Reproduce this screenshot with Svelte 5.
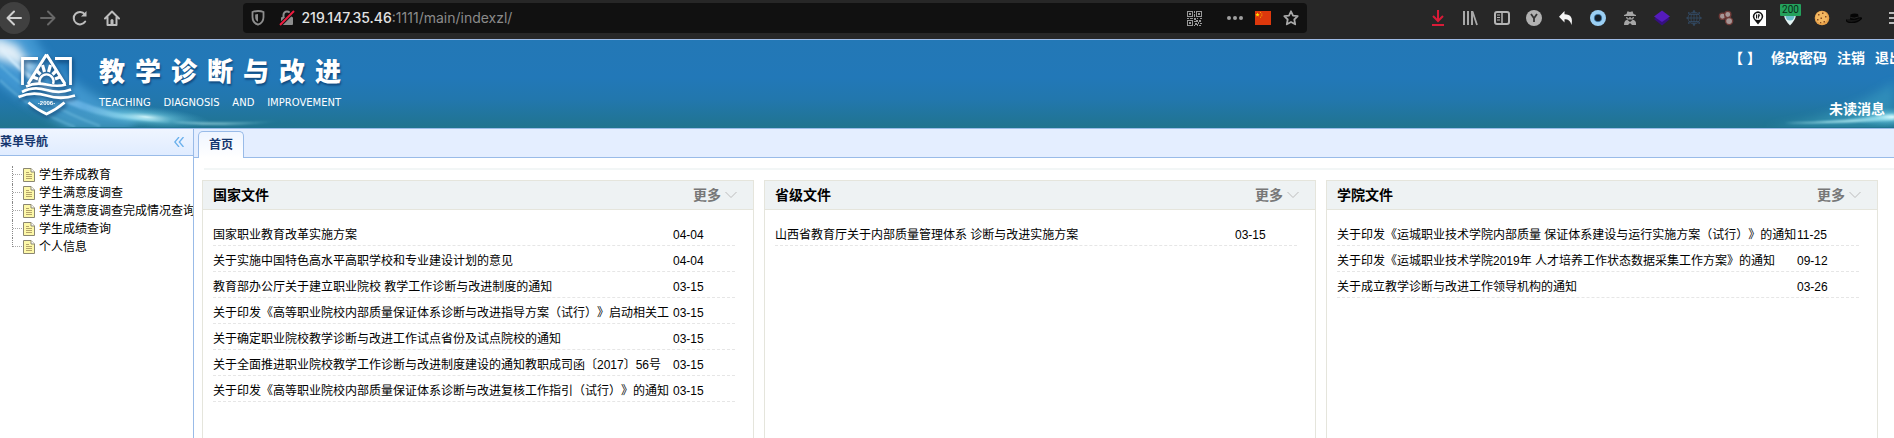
<script>
  const menu = ['学生养成教育', '学生满意度调查', '学生满意度调查完成情况查询', '学生成绩查询', '个人信息'];

  const panels = [
    {
      title: '国家文件',
      rows: [
        ['国家职业教育改革实施方案', '04-04'],
        ['关于实施中国特色高水平高职学校和专业建设计划的意见', '04-04'],
        ['教育部办公厅关于建立职业院校 教学工作诊断与改进制度的通知', '03-15'],
        ['关于印发《高等职业院校内部质量保证体系诊断与改进指导方案（试行）》启动相关工', '03-15'],
        ['关于确定职业院校教学诊断与改进工作试点省份及试点院校的通知', '03-15'],
        ['关于全面推进职业院校教学工作诊断与改进制度建设的通知教职成司函〔2017〕56号', '03-15'],
        ['关于印发《高等职业院校内部质量保证体系诊断与改进复核工作指引（试行）》的通知', '03-15']
      ]
    },
    {
      title: '省级文件',
      rows: [['山西省教育厅关于内部质量管理体系 诊断与改进实施方案', '03-15']]
    },
    {
      title: '学院文件',
      rows: [
        ['关于印发《运城职业技术学院内部质量 保证体系建设与运行实施方案（试行）》的通知', '11-25'],
        ['关于印发《运城职业技术学院2019年 人才培养工作状态数据采集工作方案》的通知', '09-12'],
        ['关于成立教学诊断与改进工作领导机构的通知', '03-26']
      ]
    }
  ];
  const brand = ['教', '学', '诊', '断', '与', '改', '进'];
  const tagline = ['TEACHING', 'DIAGNOSIS', 'AND', 'IMPROVEMENT'];
</script>

<div class="page">
  <div class="toolbar">
    <button class="tool back" aria-label="后退">
      <svg width="16" height="16" viewBox="0 0 16 16" fill="none" stroke="#d0d0d0" stroke-width="2" stroke-linecap="round" stroke-linejoin="round"><path d="M15 8H1.500M8 1.500L1.500 8L8 14.500" /></svg>
    </button>
    <button class="tool" aria-label="前进">
      <svg width="16" height="16" viewBox="0 0 16 16" fill="none" stroke="#686868" stroke-width="2" stroke-linecap="round" stroke-linejoin="round"><path d="M1 8H14.500M8 1.500L14.500 8L8 14.500" /></svg>
    </button>
    <button class="tool" aria-label="刷新">
      <svg width="16" height="16" viewBox="0 0 16 16" fill="none" stroke="#bdbdbd" stroke-width="2" stroke-linecap="round"><path d="M13.200 11.500A6.200 6.200 0 1 1 12.800 4.300" /><path d="M14.500 1V6.500H9Z" fill="#bdbdbd" stroke="none" /></svg>
    </button>
    <button class="tool" aria-label="主页">
      <svg width="16" height="16" viewBox="0 0 16 16" fill="none" stroke="#bdbdbd" stroke-width="2" stroke-linecap="round" stroke-linejoin="round"><path d="M1 8.500L8 1.500L15 8.500M3.500 7.500V15H12.500V7.500" /><path d="M8 15V10.500" stroke-width="3" /></svg>
    </button>
    <span class="spacer"></span>
    <div class="address">
      <svg width="14" height="16" viewBox="0 0 14 16"><path d="M7 1C4.500 1 3 1.300 1.500 2V7C1.500 11 3.500 13.500 7 14.700C10.500 13.500 12.500 11 12.500 7V2C11 1.300 9.500 1 7 1Z" fill="none" stroke="#8d8d8d" stroke-width="1.800" /><path d="M7 4L4.200 4.500V7C4.200 9.500 5.300 11 7 11.800Z" fill="#8d8d8d" /></svg>
      <svg class="lock" width="16" height="16" viewBox="0 0 16 16"><path d="M4.500 8V5A3.500 3.500 0 0 1 11.500 5V8" fill="none" stroke="#8d8d8d" stroke-width="2" /><rect x="2" y="7" width="12" height="8" rx="1" fill="#8d8d8d" /><path d="M1 15L15 1" stroke="#111" stroke-width="4" /><path d="M1 15L15 1" stroke="#ee1c3f" stroke-width="2" /></svg>
      <span class="url"><b>219.147.35.46</b>:1111/main/indexzl/</span>
      <svg class="qr" width="15" height="15" viewBox="0 0 15 15" fill="#999" shape-rendering="crispEdges"><path fill-rule="evenodd" d="M0 0h6v6H0zM1 1v4h4V1zM9 0h6v6H9zM10 1v4h4V1zM0 9h6v6H0zM1 10v4h4v-4z" /><path d="M2 2h2v2H2zM11 2h2v2h-2zM2 11h2v2H2zM7 0h1v2H7zM7 3h1v3H7zM0 7h2v1H0zM3 7h3v1H3zM7 7h2v2H7zM10 7h1v1h-1zM13 7h2v1h-2zM9 9h2v2H9zM12 9h2v2h-2zM7 10h2v1H7zM11 11h1v2h-1zM8 12h2v2H8zM13 12h2v1h-2zM7 14h1v1H7zM10 13h1v2h-1zM12 14h2v1h-2z" /></svg>
      <svg class="dots" width="16" height="16" viewBox="0 0 16 16" fill="#a0a0a0"><circle cx="2" cy="8" r="2" /><circle cx="8" cy="8" r="2" /><circle cx="14" cy="8" r="2" /></svg>
      <svg class="flag" width="16" height="14" viewBox="0 0 16 14"><path d="M0 0H16V14H0Z" fill="#dd380c" /><path d="M2.500 1.500l.6 1.400 1.500.1-1.100 1 .4 1.500-1.400-.8-1.300.8.3-1.500-1.100-1 1.500-.1z" fill="#ffe000" /><path d="M5 1h1v1H5zM6.300 2.500h1v1h-1zM6.300 4.300h1v1h-1zM5 5.700h1v1H5z" fill="#f5a600" /></svg>
      <svg class="star" width="16" height="16" viewBox="0 0 16 16" fill="none" stroke="#a9a9a9" stroke-width="1.800" stroke-linejoin="round"><path d="M8 1.300L10 5.600L14.700 6.200L11.300 9.500L12.200 14.300L8 12L3.800 14.300L4.700 9.500L1.300 6.200L6 5.600Z" /></svg>
    </div>
    <span class="spacer"></span>
    <button class="tool" aria-label="下载"><svg width="16" height="18" viewBox="0 0 16 18" fill="none" stroke="#d91b38" stroke-width="2"><path d="M8 1V12M3 7L8 12L13 7M2 16H14" /></svg></button>
    <button class="tool" aria-label="书库"><svg width="16" height="16" viewBox="0 0 16 16" fill="none" stroke="#a8a8a8" stroke-width="2"><path d="M2 1V15M6 1V15M10 1V15" /><path d="M10.500 1.500L15 15" stroke-width="1.800" /></svg></button>
    <button class="tool" aria-label="侧栏"><svg width="16" height="16" viewBox="0 0 16 16" fill="none" stroke="#b5b5b5"><rect x="1" y="2" width="14" height="12" rx="2" stroke-width="2" /><path d="M8 2V14" stroke-width="1.500" /><path d="M3 5H6M3 7.500H6M3 10H6" /></svg></button>
    <button class="tool" aria-label="账户"><svg width="16" height="16" viewBox="0 0 16 16"><circle cx="8" cy="8" r="8" fill="#b1b1b1" /><path d="M5 4L8 8.300L11 4M8 8V12" fill="none" stroke="#333" stroke-width="1.800" /></svg></button>
    <button class="tool" aria-label="撤销"><svg width="16" height="16" viewBox="0 0 16 16" fill="#f4f4f4"><path d="M6.500 1V4.200C13 4.200 15 8 13.500 15C12.500 11 10.500 9.200 6.500 9.200V12.500L1 6.700Z" /></svg></button>
    <button class="tool" aria-label="圆环"><svg width="16" height="16" viewBox="0 0 16 16"><circle cx="8" cy="8" r="8" fill="#9bcff3" /><circle cx="8" cy="8" r="3.800" fill="#17202a" stroke="#3e8dcc" stroke-width=".6" /></svg></button>
    <button class="tool" aria-label="隐私"><svg width="14" height="16" viewBox="0 0 14 16" fill="#a6a6a6"><path d="M3.500 4L4.500 1.200L7 2L9.500 1.200L10.500 4L13 5V6H1V5Z" /><path d="M3 7H11L10 9.500H4Z" /><path d="M1 15C1 11 3 9.500 4.500 10L7 12L9.500 10C12 9.500 13.500 12 13 15H9L7 13L5 15Z" /><path d="M4.500 7H6.300V8.300H4.500ZM7.700 7H9.500V8.300H7.700Z" fill="#222" /></svg></button>
    <button class="tool" aria-label="图层"><svg width="16" height="16" viewBox="0 0 16 16"><path d="M0 9L8 4L16 9L8 15.500Z" fill="#351080" /><path d="M0 6.500L8 .5L16 6.500L8 12Z" fill="#551bbd" /></svg></button>
    <button class="tool" aria-label="网络"><svg width="16" height="16" viewBox="0 0 16 16" fill="none" stroke="#334b66" stroke-width=".8"><circle cx="8" cy="8" r="6" /><ellipse cx="8" cy="8" rx="3" ry="6" /><path d="M8 1V15M2 8H14M3 4.500H13M3 11.500H13" /><path d="M7.200 1h1.600M7.200 15h1.600M2 3h1.600M12.400 3H14M2 13h1.600M12.400 13H14M.5 8h1.600M14 8h1.600" stroke-width="1.600" /></svg></button>
    <button class="tool" aria-label="代理"><svg width="16" height="16" viewBox="0 0 18 18" fill="#a69696" stroke="#6e3936" stroke-width="1.500"><circle cx="5" cy="7" r="3.500" /><circle cx="11" cy="5" r="3.500" /><circle cx="12.500" cy="12.500" r="4" /></svg></button>
    <button class="tool" aria-label="定位"><svg width="16" height="16" viewBox="0 0 16 16"><path d="M0 0H16V16H0Z" fill="#fff" /><path d="M8 14.500L4 9.500A5 5 0 1 1 12 9.500Z" fill="#111" /><circle cx="8" cy="6.500" r="3.600" fill="#fff" /><path d="M6.500 4.500V8.500M8.300 8.500V4.700H9.300Q10 5.700 9 6.600H8.300" fill="none" stroke="#111" /></svg></button>
    <button class="tool" aria-label="拦截计数"><svg width="14" height="16" viewBox="0 0 14 16"><path d="M1 5A6 5 0 0 1 13 5Q12.500 10 7 15.500Q1.500 10 1 5Z" fill="#e4f3f3" /><circle cx="7" cy="6" r="4.500" fill="#69bec9" /></svg><span class="badge">200</span></button>
    <button class="tool" aria-label="饼干"><svg width="16" height="16" viewBox="0 0 16 16"><circle cx="8" cy="8" r="7.300" fill="#e8a149" /><circle cx="7.500" cy="7.200" r="6" fill="#f2b761" /><path d="M4 4h1.500v1.500H4zM8 2.500h1.500V4H8zM11 6h1.500v1.500H11zM6.500 7.500H8V9H6.500zM3 9h1.500v1.500H3zM9.500 11H11v1.500H9.500zM6 12h1.300v1.300H6z" fill="#8a4b1d" /></svg></button>
    <button class="tool" aria-label="帽子"><svg width="16" height="16" viewBox="0 0 16 16"><path d="M.5 9.500Q0 12.500 5.500 12.500Q12 12.500 15.500 8.500Q16 7.500 12.500 8" fill="#161616" stroke="#050505" stroke-width="1.200" /><path d="M4 9.500L4.500 4.500Q8 3 12 4L13 8.500Q8 11 4 9.500Z" fill="#050505" /><path d="M4.500 7.500Q8 9 12.500 7" fill="none" stroke="#333" stroke-width=".7" /></svg></button>
    <button class="burger" aria-label="菜单"><svg width="16" height="16" viewBox="0 0 16 16" stroke="#bbb" stroke-width="2"><path d="M0 3H16M0 8H16M0 13H16" /></svg></button>
  </div>

  <header>
    <svg class="glow" width="340" height="87" viewBox="0 0 340 87" aria-hidden="true">
      <defs>
        <filter id="soft" x="-20%" y="-50%" width="140%" height="200%"><feGaussianBlur stdDeviation="5" /></filter>
        <filter id="fine" x="-20%" y="-50%" width="140%" height="200%"><feGaussianBlur stdDeviation="1" /></filter>
        <radialGradient id="flare"><stop offset="0" stop-color="#d9fbff" stop-opacity=".95" /><stop offset=".4" stop-color="#76cfe5" stop-opacity=".55" /><stop offset="1" stop-color="#47a6c8" stop-opacity="0" /></radialGradient>
        <linearGradient id="beam"><stop offset="0" stop-color="#e7f6ff" /><stop offset=".3" stop-color="#73bdf0" stop-opacity=".6" /><stop offset=".6" stop-color="#dcffff" /><stop offset="1" stop-color="#9ee7ec" stop-opacity="0" /></linearGradient>
      </defs>
      <path d="M-10-10H32Q48 38 140 77L130 90H70Q25 65-10 36Z" fill="#5eb5ec" opacity=".5" filter="url(#soft)" />
      <path d="M-8-5L18 5Q27 23 48 38Q20 25-8 17Z" fill="#fff" opacity=".85" filter="url(#soft)" />
      <path d="M0 7Q50 61 132 76T280 81Q180 85 115 78Q40 65 0 7Z" fill="url(#beam)" filter="url(#fine)" />
      <path d="M0 40Q30 70 75 87M0 25Q40 65 100 86" fill="none" stroke="#8bd2ee" stroke-width="2" opacity=".4" filter="url(#fine)" />
      <ellipse cx="146" cy="77" rx="65" ry="11" fill="url(#flare)" transform="rotate(5 146 77)" />
    </svg>
    <svg class="glow right" width="150" height="87" viewBox="0 0 150 87" aria-hidden="true">
      <path d="M20 88Q95 79 150 42V88Z" fill="#4ab6cf" opacity=".35" filter="url(#soft)" />
      <path d="M40 83Q100 82 150 74V80Q90 84 40 83Z" fill="#c2f7fb" opacity=".8" filter="url(#fine)" />
      <ellipse cx="148" cy="77" rx="45" ry="10" fill="url(#flare)" />
    </svg>
    <a class="brand" href="#home" aria-label="教学诊断与改进">
      <svg class="crest" width="58" height="66" viewBox="0 0 58 66" fill="none" stroke="#fff">
        <path d="M20 7.500H4.500V34M37 7.500H52.500V34" stroke-width="2.800" />
        <path d="M28.500 3.500L10 33M28.500 3.500L47 33" stroke-width="3" />
        <path d="M22 33A7 7 0 1 1 35 33" stroke-width="2.400" />
        <path d="M22.500 23.500L19 20M26.500 21L24.500 14M30.500 21L32.500 14M34.500 23.500L38 20M37 28L42 26M20 28L15 26" stroke-width="3.200" />
        <path d="M8 35.500Q17 31 28.500 33.500T48 33.500" stroke-width="2.600" />
        <path d="M4 41Q15 35 28.500 39T53 38.500" stroke-width="2.600" />
        <path d="M.5 46Q14 40 28.500 44.500T57 44.500" stroke-width="2.800" />
        <path d="M10.500 51.500Q18 58 28.500 63Q39 58 46.500 51.500" stroke-width="2.800" />
        <text x="28.500" y="54" text-anchor="middle" class="year">-2006-</text>
      </svg>
      <span class="words">
        <span class="name">{#each brand as c}<span>{c}</span>{/each}</span>
        <span class="tagline">{#each tagline as w}<span>{w}</span>{/each}</span>
      </span>
    </a>
    <div class="account">
      <nav><span>【 】</span><a href="#password">修改密码</a><a href="#logout">注销</a><a href="#exit">退出</a></nav>
      <a class="unread" href="#messages">未读消息</a>
    </div>
  </header>

  <div class="body">
    <aside>
      <div class="side-head">
        <h2>菜单导航</h2>
        <button aria-label="收起"><svg width="10" height="10" viewBox="0 0 10 10" fill="none" stroke="#69b0ec" stroke-width="1.300"><path d="M5 0L.8 5L5 10M9.500 0L5.300 5L9.500 10" /></svg></button>
      </div>
      <ul class="tree">
        {#each menu as item}
          <li>
            <span class="branch"></span>
            <svg width="12" height="14" viewBox="0 0 12 14"><path d="M.5.5H8L11.500 4V13.500H.5Z" fill="#fdf8a8" stroke="#8b8772" /><path d="M8 .5V4H11.500" fill="#fff" stroke="#8b8772" /><path d="M3 4.500H6M3 6.500H9M3 8.500H9M3 10.500H9" stroke="#b5a46a" /></svg>
            <a href="#item">{item}</a>
          </li>
        {/each}
      </ul>
    </aside>

    <main>
      <div class="tabs"><button class="tab">首页</button></div>
      <div class="rule"></div>
      <div class="panels">
        {#each panels as p}
          <section>
            <div class="head">
              <h3>{p.title}</h3>
              <a href="#more">更多<svg width="12" height="8" viewBox="0 0 12 8" fill="none" stroke="#bcbcbc"><path d="M.5 1L6 6.500L11.500 1" /></svg></a>
            </div>
            <ul>
              {#each p.rows as [title, date]}
                <li><a href="#doc">{title}</a><time>{date}</time></li>
              {/each}
            </ul>
          </section>
        {/each}
      </div>
    </main>
  </div>
</div>

<style>
  :global(body) { margin: 0; }
  .page { display: flex; flex-direction: column; height: 100vh; overflow: hidden; background: #fff; color: #000; font: 12px/18px "Liberation Sans", "Noto Sans CJK SC", sans-serif; text-spacing-trim: space-all; }
  a { color: inherit; text-decoration: none; }
  button { padding: 0; border: 0; background: none; font: inherit; color: inherit; }
  h2, h3, ul { margin: 0; padding: 0; }
  ul { list-style: none; }
  svg { display: block; flex: none; }

  .toolbar { display: flex; flex: none; height: 39px; padding-bottom: 3px; box-sizing: border-box; align-items: center; background: #272727; }
  .tool { position: relative; display: flex; flex: none; width: 32px; height: 32px; align-items: center; justify-content: center; }
  .back { margin: 0 2px 0 -2px; border-radius: 50%; background: #404040; }
  .spacer { flex: 117; }
  .address { display: flex; flex: 1061; height: 30px; padding: 0 8px; box-sizing: border-box; align-items: center; border-radius: 4px; background: #111; }
  .lock { margin: 0 6px 0 14px; }
  .url { flex: 1; color: #8b8b8b; font: 14px/20px Inter, sans-serif; white-space: nowrap; }
  .url b { color: #e3e3e3; font-weight: 500; }
  .dots { margin-left: 25px; }
  .flag { margin: 0 12px; }
  .badge { position: absolute; left: 6px; top: 2px; width: 21px; height: 12px; border-radius: 1px; background: #24a15c; color: #0a2a18; font: 10px/12px Roboto, sans-serif; text-align: center; }
  .burger { flex: none; width: 5px; margin-left: 19px; overflow: hidden; }

  header { position: relative; display: flex; flex: none; height: 88px; justify-content: space-between; overflow: hidden; border-top: 1px solid #9dbbe6; border-bottom: 1px solid #99bbe8; background: linear-gradient(#2378b6, #2278b8 42%, #2277ad 68%, #20748f); color: #fff; }
  .glow { position: absolute; left: 0; top: 0; }
  .glow.right { left: auto; right: 0; }
  .brand { position: relative; display: flex; padding: 11px 0 0 18px; gap: 23px; }
  .crest { filter: drop-shadow(1px 2px 2px #0b3d6e); }
  .year { font: bold 6px "Liberation Sans", sans-serif; fill: #fff; stroke: none; }
  .words { display: flex; flex-direction: column; gap: 11px; padding-top: 3px; }
  .name { display: flex; gap: 10px; font: 900 26px/32px "Noto Sans CJK SC", sans-serif; text-shadow: 1px 2px 2px #124b80; }
  .tagline { display: flex; justify-content: space-between; font: 10px/12px "DejaVu Sans", sans-serif; }
  .account { position: relative; display: flex; flex-direction: column; gap: 31px; padding-top: 8px; font-size: 14px; line-height: 20px; font-weight: bold; white-space: nowrap; }
  .account nav { display: flex; gap: 10px; margin-right: -9px; }
  .unread { align-self: flex-end; margin-right: 9px; }

  .body { display: flex; flex: 1; min-height: 0; }
  aside { flex: none; width: 193px; overflow: hidden; border-right: 1px solid #99bbe8; }
  .side-head { display: flex; height: 26px; padding-right: 9px; align-items: center; justify-content: space-between; border-bottom: 1px solid #99bbe8; background: linear-gradient(#eff5ff, #e0ecff); color: #15366f; }
  h2 { font-size: 12px; }
  .tree { padding: 10px 0 0 12px; }
  .tree li { display: flex; height: 18px; align-items: center; white-space: nowrap; }
  .tree a { margin-left: 4px; }
  .branch { flex: none; width: 10px; height: 18px; border-left: 1px dotted #888; background: repeating-linear-gradient(90deg, #aaa 0 1px, transparent 1px 2px) 0 8px / 9px 1px no-repeat; }
  li:last-child .branch { height: 9px; align-self: flex-start; }

  main { flex: 1; min-width: 0; }
  .tabs { display: flex; height: 28px; padding-left: 4px; align-items: flex-end; border-bottom: 1px solid #99bbe8; background: #e4eeff; }
  .tab { height: 27px; padding: 0 10px; margin-bottom: -1px; border: 1px solid #99bbe8; border-bottom: 0; border-radius: 5px 5px 0 0; background: linear-gradient(#eff5ff, #fff); color: #15366f; font-weight: bold; }
  .rule { height: 2px; margin: 10px 0 10px 10px; background: #f2f6f6; }
  .panels { display: grid; grid-template-columns: repeat(3, 1fr); gap: 10px; padding: 0 16px 0 8px; }
  section { min-width: 0; min-height: 300px; border: 1px solid #e5e5dc; }
  .head { display: flex; height: 28px; padding: 0 16px 0 10px; align-items: center; justify-content: space-between; border-bottom: 1px solid #e5e5dc; background: #eef2f3; font-size: 14px; font-weight: bold; }
  h3 { font-size: 14px; }
  .head a { display: flex; align-items: center; gap: 4px; color: #777; }
  section ul { padding: 10px 18px 0 10px; }
  section li { display: flex; height: 25px; line-height: 30px; border-bottom: 1px dashed #e6e6e6; white-space: nowrap; }
  section li a { width: 460px; overflow: hidden; }
</style>
